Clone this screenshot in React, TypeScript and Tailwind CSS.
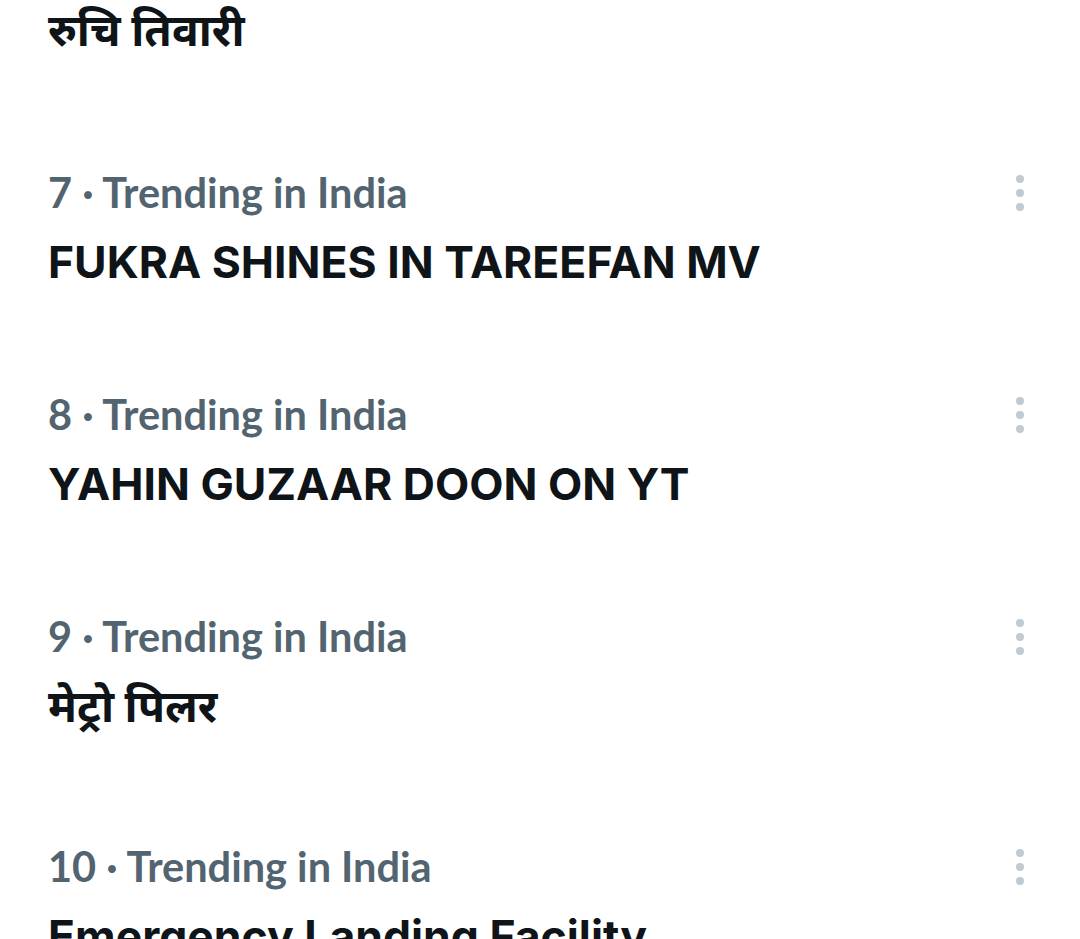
import React from 'react';

type Trend = {
    rank: number;
    title: string;
    tall?: boolean;
};

const trends: Trend[] = [
    {rank: 7, title: 'FUKRA SHINES IN TAREEFAN MV'},
    {rank: 8, title: 'YAHIN GUZAAR DOON ON YT'},
    {rank: 9, title: 'मेट्रो पिलर', tall: true},
    {rank: 10, title: 'Emergency Landing Facility'},
];

const MoreDots = () => (
    <button className="flex flex-col items-center gap-[6px] p-0 mt-[2px]" aria-label="More">
        <span className="block w-[8px] h-[8px] rounded-full bg-[#bfcad2]" />
        <span className="block w-[8px] h-[8px] rounded-full bg-[#bfcad2]" />
        <span className="block w-[8px] h-[8px] rounded-full bg-[#bfcad2]" />
    </button>
);

const TrendRow = ({trend}: {trend: Trend}) => (
    <div className={`pl-[48px] pr-[56px] pt-[48px] ${trend.tall ? 'pb-[56px]' : 'pb-[48px]'}`}>
        <div className="flex items-center justify-between h-[56px]">
            <span className="font-['Lato',sans-serif] text-[41.5px] leading-[56px] font-bold text-[#536471]">
                {trend.rank} · Trending in India
            </span>
            <MoreDots />
        </div>
        <div className="mt-[14px] text-[44.5px] leading-[56px] font-bold text-[#0f1419] whitespace-nowrap">
            {trend.title}
        </div>
    </div>
);

const App = () => {
    return (
        <div className="w-[1080px] h-[939px] overflow-hidden bg-white font-['Inter','Noto_Sans',sans-serif]">
            <div className="pl-[48px] pt-[2px] pb-[58px]">
                <div className="text-[44.5px] leading-[56px] font-bold text-[#0f1419]">रुचि तिवारी</div>
            </div>
            {trends.map(t => <TrendRow key={t.rank} trend={t} />)}
        </div>
    );
};

export default App;
